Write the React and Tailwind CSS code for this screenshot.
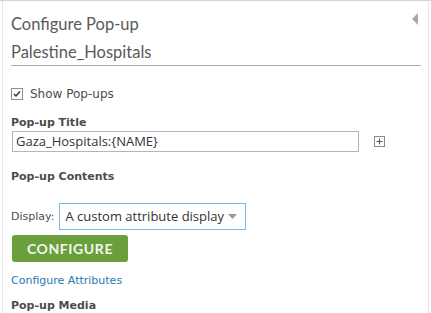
import React from 'react';

const body = { fontFamily: '"DejaVu Sans", Verdana, sans-serif' };
const field = { fontFamily: '"Open Sans", "Noto Sans", sans-serif' };
const head = { fontFamily: 'Lato, "Open Sans", sans-serif' };

export default function App() {
  return (
    <div className="w-[431px] h-[313px] overflow-hidden bg-white border-t border-[#d4d4d4]">
      <div className="ml-[2px] w-[427px] h-full border-l border-r border-[#e6e6e6] pl-[8px] pr-[6px] relative">
        {/* collapse arrow */}
        <svg className="absolute left-[409px] top-[12px]" width="6" height="12" viewBox="0 0 6 12">
          <path d="M6 0 L0 6 L6 12 Z" fill="#a8a8a8" />
        </svg>

        <div style={head} className="text-[#5a5a5a] text-[16.5px] font-normal leading-[24px] pt-[11px]">Configure Pop-up</div>
        <div style={head} className="text-[#5a5a5a] text-[16.5px] font-normal leading-[24px] pt-[4px] pb-[1px] w-[410px] border-b border-[#a9a9a9]">
          Palestine_Hospitals
        </div>

        <div style={body} className="text-[#4c4c4c]">
          <label className="flex items-center gap-[7px] mt-[21px] text-[12px] leading-[14px]">
            <span className="w-[12px] h-[12px] border border-[#8f8f8f] bg-white flex items-center justify-center">
              <svg width="8" height="8" viewBox="0 0 8 8">
                <path d="M1 4 L3 6 L7 1.5" stroke="#333" strokeWidth="1.4" fill="none" />
              </svg>
            </span>
            Show Pop-ups
          </label>

          <div className="mt-[15px] text-[11px] font-bold leading-[14px]">Pop-up Title</div>
          <div className="flex items-center mt-[1px]">
            <div style={field} className="ml-[1px] w-[347px] h-[21px] border border-[#b5b5b5] px-[3px] text-[13px] leading-[19px] text-[#333] whitespace-nowrap">
              Gaza_Hospitals:{'{'}NAME{'}'}
            </div>
            <svg className="ml-[15px]" width="11" height="11" viewBox="0 0 11 11">
              <rect x="0.5" y="0.5" width="10" height="10" fill="none" stroke="#8a8a8a" />
              <path d="M5.5 2.5 V8.5 M2.5 5.5 H8.5" stroke="#555" strokeWidth="1" />
            </svg>
          </div>

          <div className="mt-[18px] text-[11px] font-bold leading-[14px]">Pop-up Contents</div>

          <div className="flex items-center mt-[19px] gap-[5px]">
            <span className="text-[11px] leading-[14px]">Display:</span>
            <div style={field} className="w-[187px] h-[27px] border border-[#7fb8e0] flex items-center justify-between pl-[5px] pr-[8px] text-[13px] text-[#333] whitespace-nowrap">
              <span>A custom attribute display</span>
              <svg width="9" height="5" viewBox="0 0 9 5">
                <path d="M0 0 H9 L4.5 5 Z" fill="#9a9a9a" />
              </svg>
            </div>
          </div>

          <button
            style={head}
            className="mt-[5px] ml-[1px] w-[116px] h-[27px] rounded-[3px] bg-[#6a9f3c] text-[#f2f7ee] text-[14px] font-bold tracking-[0.6px] flex items-center justify-center"
          >
            CONFIGURE
          </button>

          <div className="mt-[12px] text-[11px] leading-[14px] text-[#2879b4]">Configure Attributes</div>

          <div className="mt-[11px] text-[11px] font-bold leading-[14px]">Pop-up Media</div>
        </div>
      </div>
    </div>
  );
}
